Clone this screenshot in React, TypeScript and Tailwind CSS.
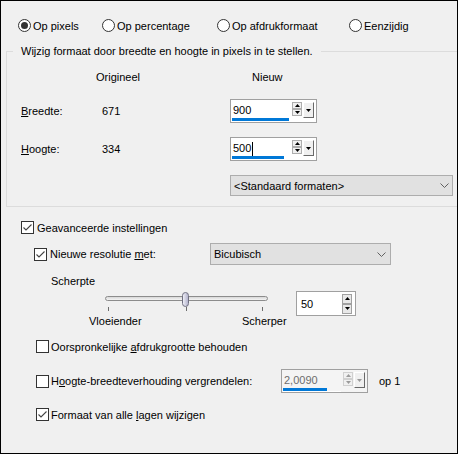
import React from 'react';

const Radio = ({ label, checked, className }: { label: string; checked?: boolean; className?: string }) => (
  <div className={`flex items-center gap-[2px] ${className ?? ''}`}>
    <div className="flex h-[13px] w-[13px] items-center justify-center rounded-full border border-[#333] bg-white">
      {checked ? <div className="h-[7px] w-[7px] rounded-full bg-[#333]" /> : null}
    </div>
    <span>{label}</span>
  </div>
);

const Checkbox = ({ checked }: { checked?: boolean }) => (
  <div className="flex h-[13px] w-[13px] shrink-0 items-center justify-center border border-[#333] bg-white">
    {checked ? (
      <svg width="11" height="11" viewBox="0 0 11 11">
        <polyline points="1.5,5.5 4,8 9.5,2.5" fill="none" stroke="#444" strokeWidth="1.1" />
      </svg>
    ) : null}
  </div>
);

const Tri = ({ up, color = '#000' }: { up?: boolean; color?: string }) => (
  <svg width="5" height="3" viewBox="0 0 5 3">
    <polygon points={up ? '0,3 5,3 2.5,0' : '0,0 5,0 2.5,3'} fill={color} />
  </svg>
);

const Chevron = () => (
  <svg width="9" height="5" viewBox="0 0 9 5">
    <polyline points="0.5,0.5 4.5,4.5 8.5,0.5" fill="none" stroke="#606060" strokeWidth="1" />
  </svg>
);

const Select = ({ label, className }: { label: string; className: string }) => (
  <div className={`flex items-center justify-between border border-[#adadad] bg-[#e1e1e1] pl-[3px] ${className}`}>
    <span>{label}</span>
    <Chevron />
  </div>
);

interface SpinProps {
  value: string;
  barClass: string;
  disabled?: boolean;
  caret?: boolean;
}

const Spin = ({ value, barClass, disabled, caret }: SpinProps) => {
  const tri = disabled ? '#9a9a9a' : '#000';
  return (
    <div className={`flex h-[24px] w-[87px] border border-[#a0a0a0] ${disabled ? 'bg-[#f4f4f4]' : 'bg-white'}`}>
      <div className="flex flex-1 flex-col pt-[3px]">
        <div className={`flex h-[15px] items-center pl-[2px] leading-[15px] ${disabled ? 'text-[#6d6d6d]' : ''}`}>
          {value}
          {caret ? <span className="ml-px inline-block h-[14px] w-px bg-black" /> : null}
        </div>
        <div className={`ml-px h-[3px] bg-[#0078d7] ${barClass}`} />
        <div className="ml-px h-px w-[58px] bg-white" />
      </div>
      <div className="mt-[2px] flex flex-col">
        <div className={`flex h-[7px] w-[10px] items-center justify-center border ${disabled ? 'border-[#d0d0d0]' : 'border-[#adadad]'} bg-[#f0f0f0]`}>
          <Tri up color={tri} />
        </div>
        <div className={`flex h-[7px] w-[10px] items-center justify-center border ${disabled ? 'border-[#d0d0d0]' : 'border-[#adadad]'} bg-[#f0f0f0]`}>
          <Tri color={tri} />
        </div>
      </div>
      <div className="ml-px mr-[2px] mt-[2px] flex h-[16px] w-[11px] items-center justify-center border border-b-[#696969] border-l-white border-r-[#696969] border-t-white bg-[#f0f0f0]">
        <Tri color={tri} />
      </div>
    </div>
  );
};

const Spin50 = () => (
  <div className="flex h-[25px] w-[60px] items-center border border-[#a0a0a0] bg-white">
    <span className="flex-1 pl-[4px]">50</span>
    <div className="mr-[3px] flex flex-col">
      <div className="flex h-[10px] w-[10px] items-center justify-center border border-[#a0a0a0] bg-[#e8e8e8]">
        <Tri up />
      </div>
      <div className="flex h-[10px] w-[10px] items-center justify-center border border-[#a0a0a0] bg-[#e8e8e8]">
        <Tri />
      </div>
    </div>
  </div>
);

const Slider = () => (
  <div className="relative ml-[16px] h-[20px] w-[163px]">
    <div className="absolute left-0 right-0 top-[5px] h-[5px] rounded-full border border-[#8c8c8c] bg-gradient-to-b from-[#d8d8d8] to-[#f4f4f4]" />
    <div className="absolute left-[77px] top-[1px] h-[15px] w-[7px] rounded-full border border-[#6f6f80] bg-gradient-to-r from-[#eeeef6] to-[#b4b4cc]" />
    <div className="absolute left-[3px] top-[16px] h-[4px] w-px bg-[#6d6d6d]" />
    <div className="absolute left-[81px] top-[16px] h-[4px] w-px bg-[#6d6d6d]" />
    <div className="absolute left-[157px] top-[16px] h-[4px] w-px bg-[#6d6d6d]" />
  </div>
);

export default function App() {
  return (
    <div className="h-[454px] w-[458px] border border-black bg-[#f0f0f0] font-['Liberation_Sans',Arial,sans-serif] text-[11px] leading-[14px] text-black">
      <div className="ml-[17px] mt-[18px] flex h-[13px] items-center">
        <Radio label="Op pixels" checked className="w-[84px]" />
        <Radio label="Op percentage" className="w-[115px]" />
        <Radio label="Op afdrukformaat" className="w-[132px]" />
        <Radio label="Eenzijdig" />
      </div>

      <fieldset className="ml-[5px] mt-[12px] border border-r-0 border-[#dcdcdc]">
        <legend className="ml-[6px] px-[8px] leading-[14px]">
          Wijzig formaat door breedte en hoogte in pixels in te stellen.
        </legend>
        <div className="pb-[10px] pl-[14px]">
          <div className="mt-[12px] flex h-[14px]">
            <span className="w-[75px]" />
            <span className="w-[156px]">Origineel</span>
            <span>Nieuw</span>
          </div>
          <div className="mt-[15px] flex h-[24px] items-center">
            <span className="w-[81px]">
              <u>B</u>reedte:
            </span>
            <span className="w-[128px]">671</span>
            <Spin value="900" barClass="w-[57px]" />
          </div>
          <div className="mt-[14px] flex h-[24px] items-center">
            <span className="w-[81px]">
              <u>H</u>oogte:
            </span>
            <span className="w-[128px]">334</span>
            <Spin value="500" barClass="w-[52px]" caret />
          </div>
          <div className="ml-[209px] mt-[14px]">
            <Select label="<Standaard formaten>" className="h-[21px] w-[223px] pr-[3px]" />
          </div>
        </div>
      </fieldset>

      <div className="ml-[20px] mt-[14px] flex h-[13px] items-center gap-[3px]">
        <Checkbox checked />
        <span>Geavanceerde instellingen</span>
      </div>

      <div className="ml-[33px] mt-[9px] flex h-[22px] items-center">
        <div className="flex w-[176px] items-center gap-[3px]">
          <Checkbox checked />
          <span>
            Nieuwe resolutie <u>m</u>et:
          </span>
        </div>
        <Select label="Bicubisch" className="h-[22px] w-[181px] pr-[4px]" />
      </div>

      <div className="ml-[50px] mt-[9px] h-[14px]">Scherpte</div>

      <div className="ml-[88px] mt-[3px] flex items-start">
        <div className="flex w-[207px] flex-col">
          <Slider />
          <div className="mt-[3px] flex h-[14px]">
            <span className="w-[153px]">Vloeiender</span>
            <span>Scherper</span>
          </div>
        </div>
        <Spin50 />
      </div>

      <div className="ml-[35px] mt-[12px] flex h-[13px] items-center gap-[2px]">
        <Checkbox />
        <span>
          Oorspronkelijke <u>a</u>fdrukgrootte behouden
        </span>
      </div>

      <div className="ml-[35px] mt-[16px] flex h-[24px] items-center">
        <div className="flex w-[245px] items-center gap-[2px]">
          <Checkbox />
          <span>
            H<u>o</u>ogte-breedteverhouding vergrendelen:
          </span>
        </div>
        <Spin value="2,0090" barClass="w-[44px]" disabled />
        <span className="ml-[11px]">op 1</span>
      </div>

      <div className="ml-[35px] mt-[15px] flex h-[13px] items-center gap-[2px]">
        <Checkbox checked />
        <span>
          Formaat van alle <u>l</u>agen wijzigen
        </span>
      </div>
    </div>
  );
}
